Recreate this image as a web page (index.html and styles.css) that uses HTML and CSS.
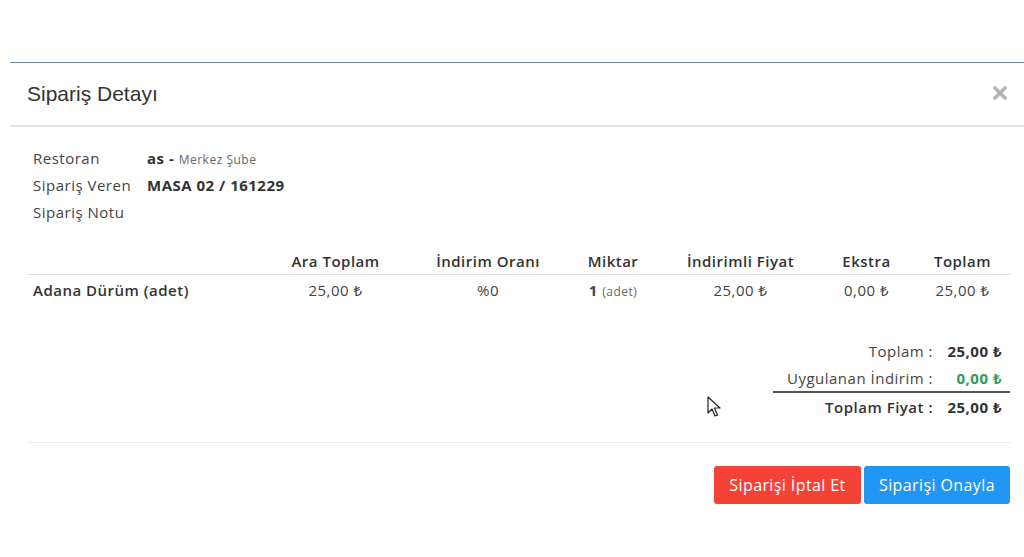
FILE: index.html
```html
<!DOCTYPE html>
<html lang="tr">
<head>
    <meta charset="UTF-8">
    <title>Sipariş Detayı</title>
    <link rel="stylesheet" href="styles.css">
</head>
<body>
    <div class="modal">
        <div class="modal-header">
            <h4 class="modal-title">Sipariş Detayı</h4>
            <button class="close" type="button" aria-label="Kapat">
                <svg width="16" height="16" viewBox="0 0 16 16">
                    <path d="M3 3 L13 13 M13 3 L3 13" stroke="#b3b3b3" stroke-width="3.6" stroke-linecap="round"/>
                </svg>
            </button>
        </div>

        <div class="modal-body">
            <div class="info">
                <div class="info-row">
                    <span class="info-label">Restoran</span>
                    <span class="info-value"><b>as -</b> <small>Merkez Şube</small></span>
                </div>
                <div class="info-row">
                    <span class="info-label">Sipariş Veren</span>
                    <span class="info-value"><b>MASA 02 / 161229</b></span>
                </div>
                <div class="info-row">
                    <span class="info-label">Sipariş Notu</span>
                    <span class="info-value"></span>
                </div>
            </div>

            <table class="items">
                <thead>
                    <tr>
                        <th class="name"></th>
                        <th>Ara Toplam</th>
                        <th>İndirim Oranı</th>
                        <th>Miktar</th>
                        <th>İndirimli Fiyat</th>
                        <th>Ekstra</th>
                        <th>Toplam</th>
                    </tr>
                </thead>
                <tbody>
                    <tr>
                        <td class="name">Adana Dürüm (adet)</td>
                        <td>25,00 ₺</td>
                        <td>%0</td>
                        <td><b>1</b> <small>(adet)</small></td>
                        <td>25,00 ₺</td>
                        <td>0,00 ₺</td>
                        <td>25,00 ₺</td>
                    </tr>
                </tbody>
            </table>

            <div class="totals">
                <div class="total-row">
                    <span class="total-label">Toplam :</span>
                    <span class="total-value">25,00 ₺</span>
                </div>
                <div class="total-row discount">
                    <span class="total-label">Uygulanan İndirim :</span>
                    <span class="total-value">0,00 ₺</span>
                </div>
                <div class="total-row grand">
                    <span class="total-label">Toplam Fiyat :</span>
                    <span class="total-value">25,00 ₺</span>
                </div>
            </div>

            <div class="modal-footer">
                <button class="btn btn-danger" type="button">Siparişi İptal Et</button>
                <button class="btn btn-primary" type="button">Siparişi Onayla</button>
            </div>
        </div>
    </div>

    <svg class="cursor" width="14" height="22" viewBox="0 0 14 22">
        <path d="M1 1 L1 17 L5 13 L8 20 L10.5 19 L7.5 12 L13 12 Z" fill="#fff" stroke="#222" stroke-width="1.2" stroke-linejoin="round"/>
    </svg>
</body>
</html>
```

FILE: styles.css
```css
body {
    margin: 0;
    padding-top: 62px;
    background: #fff;
    font-family: 'Open Sans', 'Noto Sans', sans-serif;
    letter-spacing: 0.5px;
    color: #444;
}

.modal {
    margin-left: 10px;
    border-top: 1px solid #6f8ca5;
}

.modal-header {
    display: flex;
    align-items: center;
    justify-content: space-between;
    height: 62px;
    padding: 0 14px 0 17px;
    border-bottom: 2px solid #e3e3e3;
}

.modal-title {
    margin: 0;
    font-family: 'Liberation Sans', Arial, sans-serif;
    font-size: 21px;
    font-weight: 400;
    letter-spacing: 0;
    color: #333;
}

.close {
    background: none;
    border: none;
    padding: 0;
    margin-right: 2px;
    cursor: pointer;
}

.modal-body {
    padding: 0 14px 0 17px;
}

.info {
    padding: 17px 6px 0;
}

.info-row {
    display: flex;
    align-items: center;
    height: 27px;
    font-size: 15px;
}

.info-label {
    width: 114px;
    color: #444;
}

.info-value b {
    font-weight: 700;
    color: #333;
}

.info-value small {
    font-size: 12px;
    color: #666;
}

.items {
    width: 100%;
    margin-top: 23px;
    border-collapse: collapse;
    font-size: 15px;
}

.items th {
    height: 26px;
    padding: 0;
    text-align: center;
    font-weight: 600;
    color: #333;
    border-bottom: 1px solid #e0e0e0;
    vertical-align: middle;
}

.items td {
    height: 30px;
    padding: 0;
    text-align: center;
    color: #444;
}

.items .name {
    width: 225px;
    padding-left: 6px;
    text-align: left;
    font-weight: 600;
    color: #333;
}

.items th:nth-child(2) { width: 155px; }
.items th:nth-child(3) { width: 150px; }
.items th:nth-child(4) { width: 100px; }
.items th:nth-child(5) { width: 155px; }
.items th:nth-child(6) { width: 97px; }

.items small {
    font-size: 12px;
    color: #666;
}

.totals {
    display: flex;
    flex-direction: column;
    align-items: flex-end;
    margin-top: 32px;
}

.total-row {
    display: flex;
    justify-content: flex-end;
    align-items: center;
    height: 27px;
    font-size: 15px;
}

.total-label {
    text-align: right;
    color: #444;
}

.total-value {
    width: 69px;
    padding-right: 8px;
    text-align: right;
    font-weight: 700;
    color: #333;
}

.total-row.discount {
    width: 237px;
    border-bottom: 2px solid #555;
}

.total-row.discount .total-value {
    color: #2e9e5b;
}

.total-row.grand .total-label {
    font-weight: 600;
    color: #333;
}

.modal-footer {
    display: flex;
    justify-content: flex-end;
    gap: 3px;
    margin-top: 22px;
    padding-top: 23px;
    border-top: 1px solid #ececec;
}

.btn {
    height: 38px;
    padding: 0 10px;
    border: none;
    border-radius: 3px;
    font-family: inherit;
    font-size: 16px;
    letter-spacing: 0.4px;
    color: #fff;
    cursor: pointer;
}

.btn-danger {
    width: 147px;
    background: #f44336;
}

.btn-primary {
    width: 146px;
    background: #2196f3;
}

.cursor {
    position: absolute;
    left: 707px;
    top: 396px;
}
```
